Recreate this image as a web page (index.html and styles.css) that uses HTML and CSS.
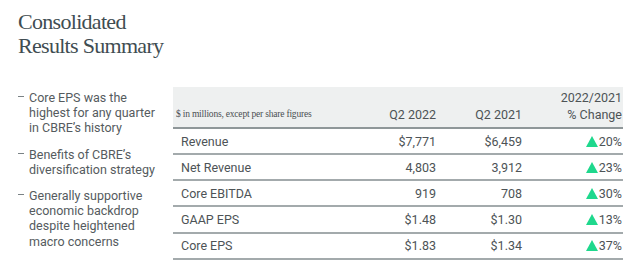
FILE: index.html
```html
<!DOCTYPE html>
<html lang="en">
<head>
  <meta charset="UTF-8" />
  <title>Consolidated Results Summary</title>
  <link rel="stylesheet" href="styles.css">
</head>
<body>
  <h1 class="title">Consolidated<br>Results Summary</h1>

  <div class="content">
    <ul class="highlights">
      <li>Core EPS was the highest for any quarter in CBRE’s history</li>
      <li>Benefits of CBRE’s diversification strategy</li>
      <li>Generally supportive economic backdrop despite heightened macro concerns</li>
    </ul>

    <table class="results">
      <thead>
        <tr>
          <th class="note">$ in millions, except per share figures</th>
          <th class="num">Q2 2022</th>
          <th class="num">Q2 2021</th>
          <th class="num change">2022/2021<br>% Change</th>
        </tr>
      </thead>
      <tbody>
        <tr><td>Revenue</td><td class="num">$7,771</td><td class="num">$6,459</td><td class="num change"><span class="up"></span>20%</td></tr>
        <tr><td>Net Revenue</td><td class="num">4,803</td><td class="num">3,912</td><td class="num change"><span class="up"></span>23%</td></tr>
        <tr><td>Core EBITDA</td><td class="num">919</td><td class="num">708</td><td class="num change"><span class="up"></span>30%</td></tr>
        <tr><td>GAAP EPS</td><td class="num">$1.48</td><td class="num">$1.30</td><td class="num change"><span class="up"></span>13%</td></tr>
        <tr><td>Core EPS</td><td class="num">$1.83</td><td class="num">$1.34</td><td class="num change"><span class="up"></span>37%</td></tr>
      </tbody>
    </table>
  </div>
</body>
</html>
```

FILE: styles.css
```css
body {
  margin: 0;
  background: #ffffff;
  font-family: Roboto, "Liberation Sans", sans-serif;
  color: #4d5356;
}

.title {
  margin: 0;
  padding: 10px 0 0 18px;
  font-family: "Liberation Serif", serif;
  font-weight: normal;
  font-size: 22px;
  line-height: 24px;
  color: #3f4d52;
  letter-spacing: -0.7px;
}

.content {
  display: flex;
  margin-top: 29px;
}

.highlights {
  list-style: none;
  margin: 0;
  padding: 3px 0 0 18px;
  width: 137px;
  font-size: 12.5px;
  line-height: 15.2px;
  color: #555b5e;
}

.highlights li {
  position: relative;
  padding-left: 11px;
  margin-bottom: 11px;
}

.highlights li::before {
  content: "";
  position: absolute;
  left: 0;
  top: 6px;
  width: 6px;
  height: 1px;
  background: #7a8285;
}

.results {
  margin-left: 18px;
  width: 450px;
  border-collapse: collapse;
  font-size: 12.5px;
  color: #4d5356;
}

.results thead tr {
  background: #eef0f0;
  height: 41px;
}

.results th {
  font-weight: normal;
  vertical-align: bottom;
  padding: 0 0 4px;
  line-height: 17px;
  border-bottom: 2px solid #8f9799;
}

.results th.note {
  text-align: left;
  padding-left: 3px;
  font-family: "Liberation Serif", serif;
  font-size: 9.5px;
  color: #4a4f52;
  letter-spacing: -0.2px;
}

.results tbody tr {
  height: 24px;
}

.results td {
  padding: 0;
  line-height: 15px;
  border-bottom: 2px solid #a3aaac;
}

.results td:first-child {
  padding-left: 8px;
}

.results .num {
  text-align: right;
  width: 86px;
}

.results .change {
  width: 100px;
  padding-right: 1px;
}

.up {
  display: inline-block;
  width: 0;
  height: 0;
  margin-right: 1px;
  border-left: 6px solid transparent;
  border-right: 6px solid transparent;
  border-bottom: 11px solid #1fd88d;
  vertical-align: -1px;
}
```
